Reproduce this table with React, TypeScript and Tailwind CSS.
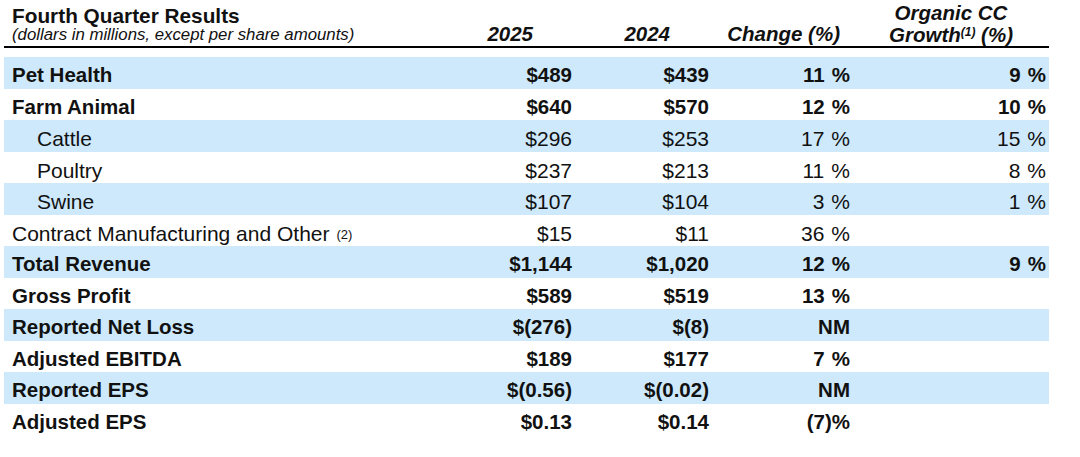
import React from "react";

type Row = {
  label: string;
  sup?: string;
  bold: boolean;
  indent?: boolean;
  band: boolean;
  v25: string;
  v24: string;
  chg: string;
  chgPct?: boolean;
  org?: string;
};

const rows: Row[] = [
  { label: "Pet Health", bold: true, band: true, v25: "$489", v24: "$439", chg: "11", chgPct: true, org: "9" },
  { label: "Farm Animal", bold: true, band: false, v25: "$640", v24: "$570", chg: "12", chgPct: true, org: "10" },
  { label: "Cattle", bold: false, indent: true, band: true, v25: "$296", v24: "$253", chg: "17", chgPct: true, org: "15" },
  { label: "Poultry", bold: false, indent: true, band: false, v25: "$237", v24: "$213", chg: "11", chgPct: true, org: "8" },
  { label: "Swine", bold: false, indent: true, band: true, v25: "$107", v24: "$104", chg: "3", chgPct: true, org: "1" },
  { label: "Contract Manufacturing and Other", sup: "(2)", bold: false, band: false, v25: "$15", v24: "$11", chg: "36", chgPct: true },
  { label: "Total Revenue", bold: true, band: true, v25: "$1,144", v24: "$1,020", chg: "12", chgPct: true, org: "9" },
  { label: "Gross Profit", bold: true, band: false, v25: "$589", v24: "$519", chg: "13", chgPct: true },
  { label: "Reported Net Loss", bold: true, band: true, v25: "$(276)", v24: "$(8)", chg: "NM" },
  { label: "Adjusted EBITDA", bold: true, band: false, v25: "$189", v24: "$177", chg: "7", chgPct: true },
  { label: "Reported EPS", bold: true, band: true, v25: "$(0.56)", v24: "$(0.02)", chg: "NM" },
  { label: "Adjusted EPS", bold: true, band: false, v25: "$0.13", v24: "$0.14", chg: "(7)%" },
];

function Pct({ n }: { n: string }) {
  return (
    <span>
      {n}
      <span className="ml-[7px]">%</span>
    </span>
  );
}

export default function App() {
  return (
    <div
      className="w-[1080px] h-[457px] bg-white text-[#111111] overflow-hidden"
      style={{ fontFamily: '"Liberation Sans", Arial, sans-serif' }}
    >
      <div className="ml-[4px] w-[1045px]">
        {/* Header */}
        <div className="grid grid-cols-[456px_112px_137px_141px_196px] pr-[3px] h-[48px] border-b-2 border-black">
          <div className="pl-[8px] pt-[5px] flex flex-col">
            <div className="text-[20.8px] font-bold leading-[21px]">Fourth Quarter Results</div>
            <div className="text-[16.8px] italic leading-[16px] mt-[1px]">
              (dollars in millions, except per share amounts)
            </div>
          </div>
          <div className="flex items-end justify-end pr-[39px] pb-[2px] text-[20.5px] font-bold italic leading-none">
            2025
          </div>
          <div className="flex items-end justify-end pr-[39px] pb-[2px] text-[20.5px] font-bold italic leading-none">
            2024
          </div>
          <div className="flex items-end justify-end pr-[10px] pb-[2px] text-[20.5px] font-bold italic leading-none whitespace-nowrap">
            Change (%)
          </div>
          <div className="flex items-end justify-end pr-[33px] text-[20.5px] font-bold italic leading-[22px]">
            <div className="text-center whitespace-nowrap">
              <div>Organic CC</div>
              <div>
                Growth<sup className="text-[12px] font-bold italic">(1)</sup> (%)
              </div>
            </div>
          </div>
        </div>

        {/* Rows */}
        <div className="mt-[9px] flex flex-col">
          {rows.map((r, i) => (
            <div
              key={i}
              className={
                "grid grid-cols-[456px_112px_137px_141px_196px] pr-[3px] h-[31.5px] pt-[8px] leading-none whitespace-nowrap " +
                (r.band ? "bg-[#cde9fb] " : "bg-white ") +
                (r.bold ? "font-bold text-[20.5px]" : "font-normal text-[21px]")
              }
            >
              <div className={r.indent ? "pl-[33px]" : "pl-[8px]"}>
                {r.label}
                {r.sup && (
                  <sup className="text-[13px] font-normal ml-[7px] relative top-[-2px]">{r.sup}</sup>
                )}
              </div>
              <div className="text-right">{r.v25}</div>
              <div className="text-right">{r.v24}</div>
              <div className="text-right">{r.chgPct ? <Pct n={r.chg} /> : r.chg}</div>
              <div className="text-right">{r.org ? <Pct n={r.org} /> : null}</div>
            </div>
          ))}
        </div>
      </div>
    </div>
  );
}
